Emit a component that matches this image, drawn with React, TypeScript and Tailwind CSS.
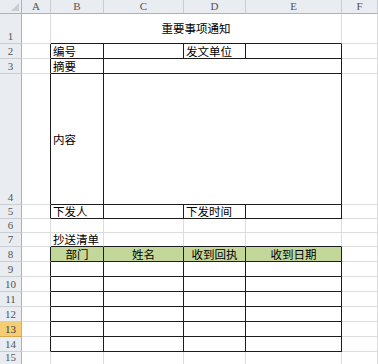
import clsx from "clsx";
import type { ReactNode } from "react";

const font = { fontFamily: '"Noto Sans CJK SC", "Noto Sans", sans-serif' };

type Edge = "grid" | "dark";

function Cell({
  children,
  r = "grid",
  b = "grid",
  className,
}: {
  children?: ReactNode;
  r?: Edge;
  b?: Edge;
  className?: string;
}) {
  return (
    <div
      className={clsx(
        "flex items-center overflow-visible whitespace-nowrap border-r border-b text-[11.5px] leading-[11px] text-black",
        r === "dark" ? "border-r-[#1c1c1c]" : "border-r-[#dcdcdc]",
        b === "dark" ? "border-b-[#1c1c1c]" : "border-b-[#dcdcdc]",
        className
      )}
    >
      {children}
    </div>
  );
}

function ColHead({ label }: { label: string }) {
  return (
    <div className="flex items-center justify-center border-r border-b border-r-[#c9ced5] border-b-[#a9b2bd] bg-[#e9ecf0] text-[11px] leading-none text-[#555] [font-family:'Liberation_Serif',serif]">
      {label}
    </div>
  );
}

function RowHead({ n, active }: { n: number; active?: boolean }) {
  return (
    <div
      className={clsx(
        "flex items-end justify-center border-r border-b border-r-[#a9b2bd] pb-px text-[11px] leading-none [font-family:'Liberation_Serif',serif]",
        active
          ? "bg-[#f5cd75] border-b-[#d8a84a] text-[#3a3a3a]"
          : "bg-[#e9ecf0] border-b-[#c9ced5] text-[#555]"
      )}
    >
      {n}
    </div>
  );
}

const Label = ({ children }: { children: ReactNode }) => <span className="pl-[2px]">{children}</span>;

export default function App() {
  const listRows = [9, 10, 11, 12, 13, 14];
  return (
    <div className="w-[378px] h-[364px] overflow-hidden bg-white" style={font}>
      <div className="grid grid-cols-[22px_29px_53px_80px_62px_96px_36px] grid-rows-[14px_30px_15px_15px_131px_14px_14px_14px_15px_15px_15px_15px_15px_15px_15px]">
        {/* header */}
        <div className="relative border-r border-b border-r-[#a9b2bd] border-b-[#a9b2bd] bg-[#e9ecf0]">
          <svg className="absolute right-[2px] bottom-[2px]" width="8" height="8" viewBox="0 0 8 8">
            <path d="M8 0 L8 8 L0 8 Z" fill="#c9ced5" />
          </svg>
        </div>
        {["A", "B", "C", "D", "E", "F"].map((c) => (
          <ColHead key={c} label={c} />
        ))}

        {/* row 1 */}
        <RowHead n={1} />
        <Cell />
        <Cell b="dark" className="col-span-4 justify-center">
          重要事项通知
        </Cell>
        <Cell />

        {/* row 2 */}
        <RowHead n={2} />
        <Cell r="dark" />
        <Cell r="dark" b="dark">
          <Label>编号</Label>
        </Cell>
        <Cell r="dark" b="dark" />
        <Cell r="dark" b="dark">
          <Label>发文单位</Label>
        </Cell>
        <Cell r="dark" b="dark" />
        <Cell />

        {/* row 3 */}
        <RowHead n={3} />
        <Cell r="dark" />
        <Cell r="dark" b="dark">
          <Label>摘要</Label>
        </Cell>
        <Cell r="dark" b="dark" className="col-span-3" />
        <Cell />

        {/* row 4 */}
        <RowHead n={4} />
        <Cell r="dark" />
        <Cell r="dark" b="dark">
          <Label>内容</Label>
        </Cell>
        <Cell r="dark" b="dark" className="col-span-3" />
        <Cell />

        {/* row 5 */}
        <RowHead n={5} />
        <Cell r="dark" />
        <Cell r="dark" b="dark">
          <Label>下发人</Label>
        </Cell>
        <Cell r="dark" b="dark" />
        <Cell r="dark" b="dark">
          <Label>下发时间</Label>
        </Cell>
        <Cell r="dark" b="dark" />
        <Cell />

        {/* row 6 */}
        <RowHead n={6} />
        <Cell />
        <Cell />
        <Cell />
        <Cell />
        <Cell />
        <Cell />

        {/* row 7 */}
        <RowHead n={7} />
        <Cell />
        <Cell b="dark">
          <Label>抄送清单</Label>
        </Cell>
        <Cell b="dark" />
        <Cell b="dark" />
        <Cell b="dark" />
        <Cell />

        {/* row 8 */}
        <RowHead n={8} />
        <Cell r="dark" />
        {["部门", "姓名", "收到回执", "收到日期"].map((h) => (
          <Cell key={h} r="dark" b="dark" className="justify-center bg-[#c4d79b]">
            {h}
          </Cell>
        ))}
        <Cell />

        {listRows.map((n) => (
          <div key={n} className="contents">
            <RowHead n={n} active={n === 13} />
            <Cell r="dark" />
            <Cell r="dark" b="dark" />
            <Cell r="dark" b="dark" />
            <Cell r="dark" b="dark" />
            <Cell r="dark" b="dark" />
            <Cell />
          </div>
        ))}

        {/* row 15 */}
        <RowHead n={15} />
        <Cell />
        <Cell />
        <Cell />
        <Cell />
        <Cell />
        <Cell />
      </div>
    </div>
  );
}
